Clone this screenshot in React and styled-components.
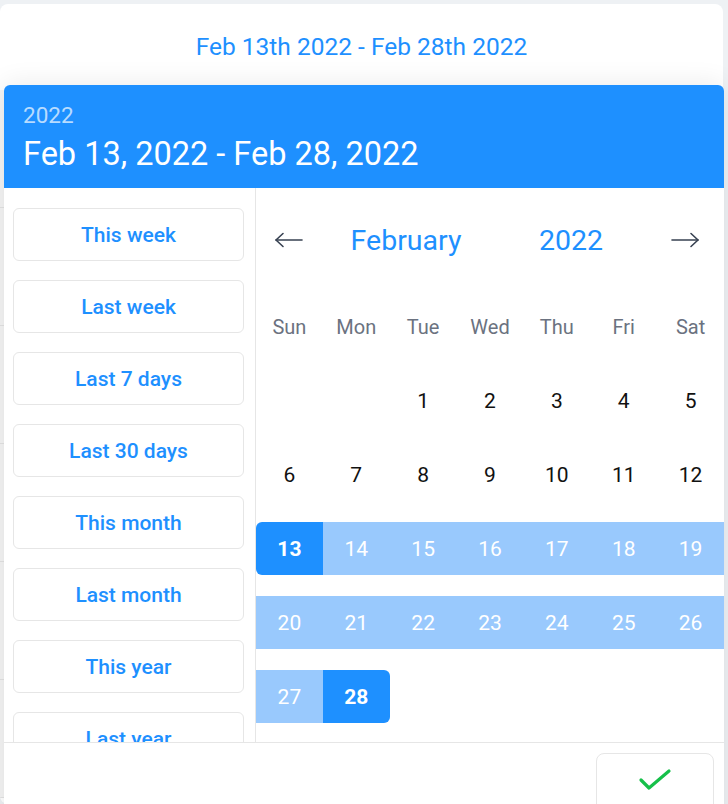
import React from 'react';
import styled, { createGlobalStyle, css } from 'styled-components';

const GlobalStyle = createGlobalStyle`
  html, body {
    margin: 0;
    padding: 0;
    height: 804px;
    overflow: hidden;
    background: #eef1f4;
    font-family: Roboto, "Liberation Sans", sans-serif;
  }
`;

const blue = '#1e90ff';
const rangeBlue = '#99c9fd';

const presets = ["This week", "Last week", "Last 7 days", "Last 30 days", "This month", "Last month", "This year", "Last year"];
const weekdays = ["Sun", "Mon", "Tue", "Wed", "Thu", "Fri", "Sat"];

// Feb 2022 starts on a Tuesday
const days = [null, null, ...Array.from({ length: 28 }, (_, i) => i + 1)];

function dayState(d) {
    if (d === 13) return 'start';
    if (d === 28) return 'end';
    if (d > 13 && d < 28) return 'range';
    return 'none';
}

function ArrowIcon({ flip }) {
    return (
        <svg width="30" height="16" viewBox="0 0 30 16" style={flip ? { transform: 'scaleX(-1)' } : undefined}>
            <line x1="2" y1="8" x2="28" y2="8" stroke="#374151" strokeWidth="1.6" strokeLinecap="round" />
            <polyline points="9,1.5 2,8 9,14.5" fill="none" stroke="#374151" strokeWidth="1.6" strokeLinecap="round" strokeLinejoin="round" />
        </svg>
    );
}

function App() {
    return (
        <>
            <GlobalStyle />
            <Page>
                <Card>
                    <DateField>Feb 13th 2022 - Feb 28th 2022</DateField>
                    {[0, 1, 2, 3, 4, 5].map((i) => (
                        <BgRow key={i} />
                    ))}
                </Card>

                <Popover>
                    <Header>
                        <HeaderYear>2022</HeaderYear>
                        <HeaderRange>Feb 13, 2022 - Feb 28, 2022</HeaderRange>
                    </Header>
                    <Body>
                        <PresetColumn>
                            {presets.map((p) => (
                                <PresetButton key={p}>{p}</PresetButton>
                            ))}
                        </PresetColumn>
                        <Calendar>
                            <NavRow>
                                <NavArrow><ArrowIcon /></NavArrow>
                                <NavLabel>February</NavLabel>
                                <NavLabel $year>2022</NavLabel>
                                <NavArrow $right><ArrowIcon flip /></NavArrow>
                            </NavRow>
                            <DayGrid>
                                {weekdays.map((w) => (
                                    <Weekday key={w}>{w}</Weekday>
                                ))}
                                {days.map((d, i) => (
                                    <Day key={i} $state={d ? dayState(d) : 'none'}>{d}</Day>
                                ))}
                            </DayGrid>
                        </Calendar>
                    </Body>
                    <Footer>
                        <ConfirmButton>
                            <svg width="34" height="24" viewBox="0 0 34 24">
                                <polyline points="3,12 11,20 31,3" fill="none" stroke="#16c04a" strokeWidth="3.2" strokeLinecap="round" strokeLinejoin="round" />
                            </svg>
                        </ConfirmButton>
                    </Footer>
                </Popover>
            </Page>
        </>
    );
}

export default App;



const Page = styled.div`
    position: relative;
    width: 728px;
    height: 804px;
    padding-top: 4px;
    box-sizing: border-box;
`

const Card = styled.div`
    width: 723px;
    height: 800px;
    background: #ffffff;
    border-radius: 8px;
    overflow: hidden;
    display: flex;
    flex-direction: column;
`

const DateField = styled.div`
    height: 86px;
    flex-shrink: 0;
    display: flex;
    align-items: center;
    justify-content: center;
    color: ${blue};
    font-size: 24.5px;
    padding-bottom: 2px;
    box-sizing: border-box;
`

const BgRow = styled.div`
    height: 118px;
    flex-shrink: 0;
    background: #f4f4f4;
    border-bottom: 1px solid #e2e2e2;
    box-sizing: border-box;
`

const Popover = styled.div`
    position: absolute;
    top: 85px;
    left: 4px;
    width: 720px;
    background: #ffffff;
    border-radius: 6px 6px 0 0;
    box-shadow: 0 0 28px rgba(0, 0, 0, 0.09);
    display: flex;
    flex-direction: column;
`

const Header = styled.div`
    height: 103px;
    background: ${blue};
    border-radius: 6px 6px 0 0;
    padding: 16px 19px 0;
    box-sizing: border-box;
    display: flex;
    flex-direction: column;
    gap: 6px;
`

const HeaderYear = styled.div`
    color: rgba(255, 255, 255, 0.7);
    font-size: 22.5px;
    line-height: 28px;
`

const HeaderRange = styled.div`
    color: #ffffff;
    font-size: 32.5px;
    line-height: 38px;
`

const Body = styled.div`
    height: 554px;
    display: flex;
`

const PresetColumn = styled.div`
    width: 252px;
    flex-shrink: 0;
    border-right: 1px solid #e6e6e6;
    padding: 20px 11px 0 9px;
    box-sizing: border-box;
    display: flex;
    flex-direction: column;
    gap: 19px;
    overflow: hidden;
`

const PresetButton = styled.div`
    height: 53px;
    flex-shrink: 0;
    box-sizing: border-box;
    border: 1px solid #e6e6e6;
    border-radius: 6px;
    display: flex;
    align-items: center;
    justify-content: center;
    color: ${blue};
    font-size: 21px;
    font-weight: 500;
`

const Calendar = styled.div`
    flex: 1;
    padding-top: 20px;
    display: flex;
    flex-direction: column;
`

const NavRow = styled.div`
    height: 64px;
    display: grid;
    grid-template-columns: 66px 1fr 1fr 66px;
    align-items: center;
    margin-bottom: 28px;
`

const NavArrow = styled.div`
    display: flex;
    justify-content: center;
    ${({ $right }) => $right && css`
        padding-right: 12px;
    `}
`

const NavLabel = styled.div`
    color: ${blue};
    font-size: 28.5px;
    text-align: center;
    ${({ $year }) => $year && css`
        padding-right: 6px;
    `}
`

const DayGrid = styled.div`
    display: grid;
    grid-template-columns: repeat(7, 1fr);
    grid-auto-rows: 53px;
    row-gap: 21px;
`

const Weekday = styled.div`
    display: flex;
    align-items: center;
    justify-content: center;
    color: #6b7280;
    font-size: 20px;
`

const Day = styled.div`
    display: flex;
    align-items: center;
    justify-content: center;
    font-size: 21px;
    color: #111111;
    ${({ $state }) => $state === 'range' && css`
        background: ${rangeBlue};
        color: #ffffff;
    `}
    ${({ $state }) => $state === 'start' && css`
        background: ${blue};
        color: #ffffff;
        font-weight: 700;
        border-radius: 6px 0 0 6px;
    `}
    ${({ $state }) => $state === 'end' && css`
        background: ${blue};
        color: #ffffff;
        font-weight: 700;
        border-radius: 0 6px 6px 0;
    `}
`

const Footer = styled.div`
    height: 80px;
    border-top: 1px solid #e6e6e6;
    display: flex;
    justify-content: flex-end;
    align-items: flex-start;
    padding: 10px 10px 0 0;
`

const ConfirmButton = styled.div`
    width: 118px;
    height: 62px;
    border: 1px solid #e6e6e6;
    border-radius: 8px;
    box-sizing: border-box;
    display: flex;
    align-items: center;
    justify-content: center;
    padding-bottom: 8px;
`
